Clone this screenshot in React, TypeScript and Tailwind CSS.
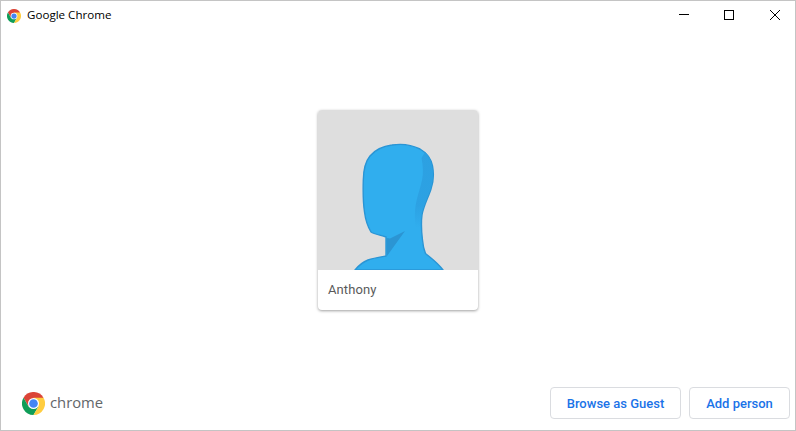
function ChromeLogo({ size }: { size: number }) {
  return (
    <svg width={size} height={size} viewBox="0 0 48 48" className="shrink-0">
      <path d="M24 24 L44.8 12 A24 24 0 0 0 3.2 12 L13.6 30 Z" fill="#db4437" />
      <path d="M24 24 L13.6 30 L3.2 12 A24 24 0 0 0 24 48 L34.4 30 Z" fill="#0f9d58" />
      <path d="M24 24 L24 12 L44.8 12 A24 24 0 0 1 24 48 L34.4 30 Z" fill="#ffcd40" />
      <circle cx="24" cy="24" r="11.5" fill="#fff" />
      <circle cx="24" cy="24" r="9" fill="#4285f4" />
    </svg>
  );
}

const HEAD =
  "M37 160 C41 155 45 152 50 150 C55 148 62 147 68 146 L68 127 C62 125 56 124 53 122 C50 117 47.5 110 46.5 102 C45 92 45 80 45.3 70 C45.5 60 47 52 52 46 C57 40 66 36 74 35 C84 33.5 94 35 102 39 C109 43 113 48 114.5 56 C116 64 115.5 72 113 79 C110.5 87 105.5 96 104 105 C103 113 103.5 122 104.5 130 C105 136 106 140 107.5 143.5 C113 148 120 153 125 160 Z";

function Avatar() {
  return (
    <svg width="160" height="160" viewBox="0 0 160 160" className="block">
      <defs>
        <linearGradient id="side" x1="0" y1="0" x2="0" y2="1">
          <stop offset="0" stopColor="#2c9fe0" stopOpacity="0.9" />
          <stop offset="0.7" stopColor="#2ca0e2" stopOpacity="0.9" />
          <stop offset="1" stopColor="#2ca0e2" stopOpacity="0" />
        </linearGradient>
      </defs>
      <rect width="160" height="160" fill="#dedede" />
      <path d={HEAD} fill="#30aeee" stroke="#2a95d5" strokeWidth="1.4" />
      <path d="M68.5 128 L72 128.5 L87 121 L69 146 Z" fill="#2b95d3" />
      <path d="M103.5 48 C105 56 105.5 63 104 70 C102.5 78 99 86 97.5 96 C96.5 103 96.8 110 97.5 118 L103.5 118 C103 110 103 108 103.5 105 C105 96 110 87 112.5 79 C115 72 115.5 64 114 56 C113 50 110.5 45.5 107 42 Z" fill="url(#side)" />
    </svg>
  );
}

export default function App() {
  return (
    <div className="w-[796px] h-[431px] flex flex-col bg-white border border-[#c4c4c4] overflow-hidden">
      <div className="h-[29px] flex items-center shrink-0">
        <div className="ml-[6px] flex items-center gap-[6px]">
          <ChromeLogo size={14} />
          <span className="text-[11.6px] leading-[16px] -mt-[1px] text-black font-['Open_Sans',sans-serif]">Google Chrome</span>
        </div>
        <div className="ml-auto mr-[15px] mb-[1px] flex items-center gap-[35px]">
          <svg width="10" height="10" viewBox="0 0 10 10"><path d="M0 4.5H10" stroke="#000" strokeWidth="1" /></svg>
          <svg width="10" height="10" viewBox="0 0 10 10"><rect x="0.5" y="0.5" width="9" height="9" fill="none" stroke="#000" strokeWidth="1" /></svg>
          <svg width="10" height="10" viewBox="0 0 10 10" className="ml-[1px]"><path d="M0 0L10 10M10 0L0 10" stroke="#000" strokeWidth="1" /></svg>
        </div>
      </div>

      <div className="flex-1 flex justify-center pt-[80px]">
        <div className="w-[160px] h-[200px] rounded-[4px] overflow-hidden bg-white shadow-[0_1px_3px_rgba(0,0,0,0.38)]">
          <Avatar />
          <div className="h-[40px] flex items-center pl-[10px] text-[13px] text-[#5a5a5a] tracking-[0.1px] font-['Roboto',sans-serif]">Anthony</div>
        </div>
      </div>

      <div className="h-[44px] mb-[5px] flex items-center shrink-0 pl-[21px] pr-[5px]">
        <div className="flex items-center gap-[5px]">
          <ChromeLogo size={23} />
          <span className="text-[14.8px] leading-none text-[#63666a] font-['Open_Sans',sans-serif] -mt-[2px]">chrome</span>
        </div>
        <div className="ml-auto flex items-center gap-[8px]">
          <button className="w-[131px] h-[32px] pt-[1px] rounded-[4px] border border-[#dadce0] bg-white text-[13px] font-medium text-[#1a73e8] font-['Roboto',sans-serif]">Browse as Guest</button>
          <button className="w-[101px] h-[32px] pt-[1px] rounded-[4px] border border-[#dadce0] bg-white text-[13px] font-medium text-[#1a73e8] font-['Roboto',sans-serif]">Add person</button>
        </div>
      </div>
    </div>
  );
}
